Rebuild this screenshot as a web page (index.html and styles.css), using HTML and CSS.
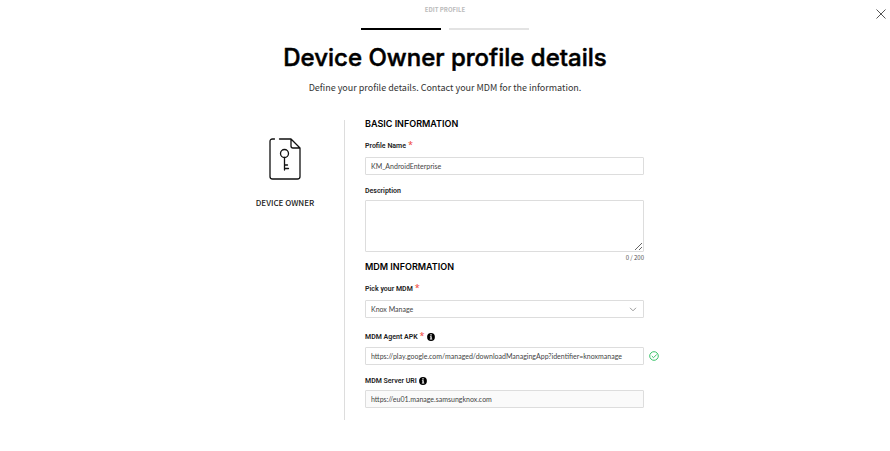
FILE: index.html
```html
<!DOCTYPE html>
<html lang="en">
<head>
<meta charset="utf-8">
<meta name="viewport" content="width=device-width, initial-scale=1">
<title>Edit profile</title>
<link rel="stylesheet" href="styles.css">
</head>
<body>
<button class="close" type="button" aria-label="Close">
  <svg viewBox="0 0 10 10" width="10" height="10" fill="none" stroke="#555"><path d="M.5.5l9 9M9.500.5l-9 9"/></svg>
</button>
<header class="header">
  <p class="eyebrow">EDIT PROFILE</p>
  <div class="steps"><span class="step step-active"></span><span class="step"></span></div>
  <h1 class="title">Device Owner profile details</h1>
  <p class="subtitle">Define your profile details. Contact your MDM for the information.</p>
</header>
<main class="content">
  <aside class="kind">
    <svg class="kind-icon" viewBox="0 0 32 42" width="32" height="42" fill="none" stroke="#111" stroke-width="1.300" stroke-linecap="round" stroke-linejoin="round">
      <path d="M5.500 1H3.500Q1 1 1 3.500V38.500Q1 41 3.500 41H28.500Q31 41 31 38.500V10L22 1H10.500M22 1V8Q22 10 24 10H31"/>
      <circle cx="15.500" cy="15.500" r="4"/>
      <path d="M15.500 19.500V32M15.500 27H18.500M15.500 30.500H19.500"/>
    </svg>
    <p class="kind-name">DEVICE OWNER</p>
  </aside>
  <form class="form">
    <h2 class="section">BASIC INFORMATION</h2>
    <div class="label-row"><label for="name">Profile Name</label><span class="required">*</span></div>
    <div class="field"><input class="control" id="name" type="text" value="KM_AndroidEnterprise"></div>
    <div class="label-row label-near"><label for="description">Description</label></div>
    <div class="field"><textarea class="control area" id="description"></textarea><span class="counter">0 / 200</span></div>
    <h2 class="section">MDM INFORMATION</h2>
    <div class="label-row"><label for="mdm">Pick your MDM</label><span class="required">*</span></div>
    <div class="field">
      <div class="picker">
        <select class="control" id="mdm"><option>Knox Manage</option></select>
        <svg class="chevron" viewBox="0 0 8 5" width="8" height="5" fill="none" stroke="#999"><path d="M1 .8l3 3 3-3"/></svg>
      </div>
    </div>
    <div class="label-row label-far"><label for="apk">MDM Agent APK</label><span class="required">*</span>
      <svg class="info" viewBox="0 0 8 8" width="8" height="8"><circle cx="4" cy="4" r="3.900"/><path d="M3.300 1.300h1.400v1.200H3.300zM2.900 3.200h1.800v2.600h.6v.8H2.800v-.8h.6V4h-.5z" fill="#fff"/></svg>
    </div>
    <div class="field">
      <input class="control" id="apk" type="text" value="https://play.google.com/managed/downloadManagingApp?identifier=knoxmanage">
      <svg class="valid" viewBox="0 0 10 10" width="10" height="10" fill="none" stroke="#3cc46c"><circle cx="5" cy="5" r="4.300"/><path d="M2.800 5l1.700 1.700 3.300-3.300"/></svg>
    </div>
    <div class="label-row label-near"><label for="uri">MDM Server URI</label>
      <svg class="info" viewBox="0 0 8 8" width="8" height="8"><circle cx="4" cy="4" r="3.900"/><path d="M3.300 1.300h1.400v1.200H3.300zM2.900 3.200h1.800v2.600h.6v.8H2.800v-.8h.6V4h-.5z" fill="#fff"/></svg>
    </div>
    <div class="field"><input class="control control-locked" id="uri" type="text" value="https://eu01.manage.samsungknox.com" readonly></div>
  </form>
</main>
</body>
</html>
```
FILE: styles.css
```css
* { box-sizing: border-box; }

body {
  margin: 0;
  background: #fff;
  color: #222;
  font-family: "Noto Sans CJK KR", sans-serif;
}

h1, h2, p { margin: 0; }

.close {
  position: absolute;
  top: 9px;
  right: 4px;
  display: flex;
  padding: 0;
  border: 0;
  background: none;
}

.header {
  display: flex;
  flex-direction: column;
  align-items: center;
  padding-top: 5px;
  text-align: center;
}

.eyebrow {
  color: #bbb;
  font-size: 6px;
  font-weight: 700;
  line-height: 10px;
}

.steps {
  display: flex;
  gap: 8px;
  margin-top: 13px;
}

.step {
  width: 80px;
  height: 2px;
  background: #e3e3e3;
}

.step-active { background: #000; }

.title {
  margin-top: 14px;
  color: #000;
  font-family: Inter, sans-serif;
  font-size: 24px;
  font-weight: 500;
  line-height: 28px;
  -webkit-text-stroke: 0.5px #000;
}

.subtitle {
  margin-top: 9px;
  color: #333;
  font-size: 9px;
  line-height: 14px;
}

.content {
  display: grid;
  grid-template-columns: 118px 1fr;
  max-width: 438px;
  margin: 25px auto 0;
}

.kind {
  display: flex;
  flex-direction: column;
  align-items: center;
  padding-top: 18px;
}

.kind-name {
  margin-top: 16px;
  font-size: 8px;
  font-weight: 500;
  line-height: 14px;
}

.form {
  padding: 0 0 12px 20px;
  border-left: 1px solid #ddd;
}

.section {
  color: #000;
  font-family: Inter, sans-serif;
  font-size: 9px;
  font-weight: 600;
  line-height: 8px;
}

.label-row {
  display: flex;
  align-items: center;
  gap: 2px;
  height: 12px;
  margin: 12px 0 5px;
  font-family: Roboto, sans-serif;
  font-size: 7px;
  font-weight: 600;
  line-height: 12px;
}

.label-near {
  margin-top: 10px;
  margin-bottom: 3px;
}

.label-far {
  margin-top: 13px;
  margin-bottom: 4px;
}

.required {
  align-self: flex-start;
  color: #f04438;
  font-family: "Noto Sans", sans-serif;
  font-size: 9px;
  font-weight: 400;
  line-height: 10px;
}

.field {
  display: grid;
  grid-template-columns: 1fr 20px;
  align-items: center;
}

.control {
  display: block;
  width: 100%;
  height: 18px;
  margin: 0;
  padding: 0 5px;
  border: 1px solid #ddd;
  border-radius: 1px;
  outline: 0;
  background: #fff;
  color: #444;
  font-family: Lato, sans-serif;
  font-size: 7px;
  line-height: 12px;
}

.control-locked { background: #fafafa; }

.area {
  height: 52px;
  resize: vertical;
}

.counter {
  grid-column: 1;
  color: #555;
  font-size: 6px;
  line-height: 11px;
  text-align: right;
}

.picker { position: relative; }

.picker .control { appearance: none; }

.chevron {
  position: absolute;
  top: 7px;
  right: 7px;
  pointer-events: none;
}

.valid { margin-left: 5px; }
```
